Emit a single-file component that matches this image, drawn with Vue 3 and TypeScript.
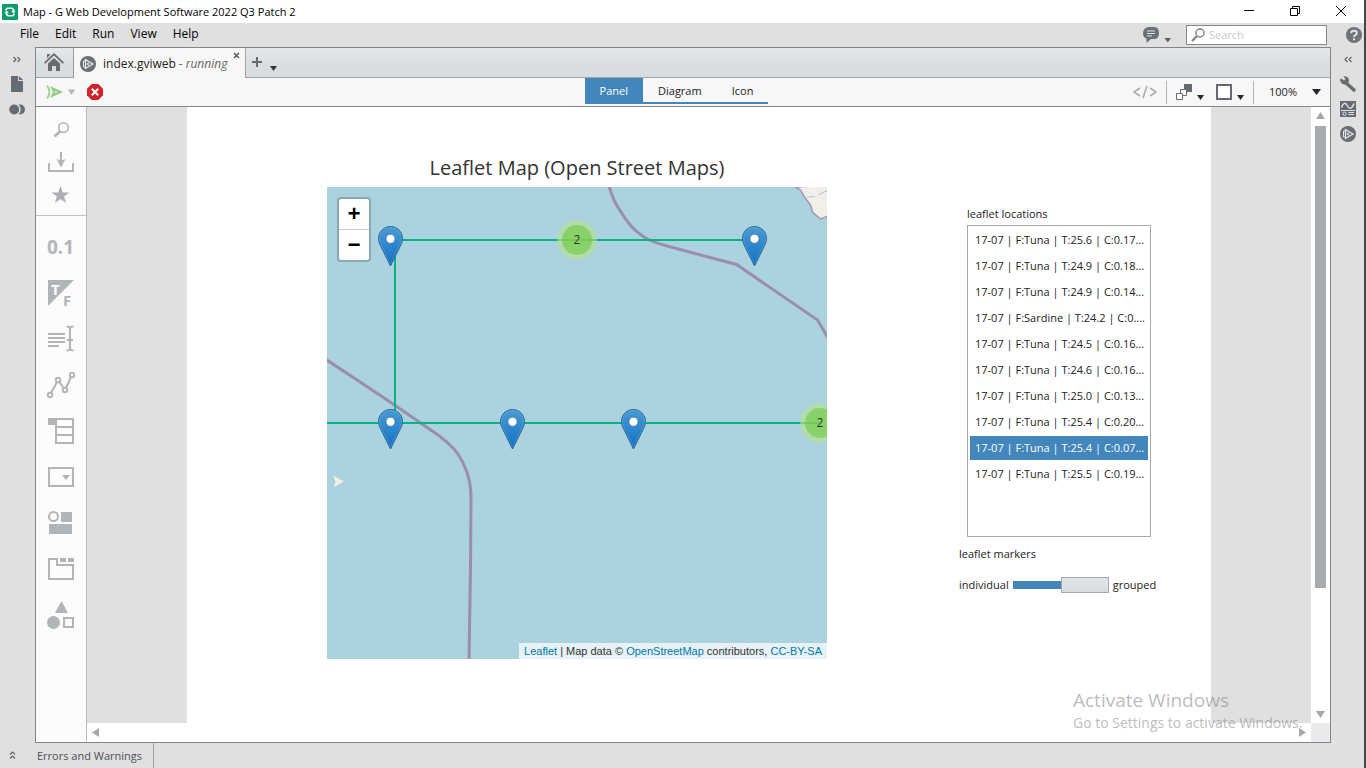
<script setup lang="ts">
import { ref } from 'vue'

const menus = ['File', 'Edit', 'Run', 'View', 'Help']
const views = ['Panel', 'Diagram', 'Icon']
const activeView = ref('Panel')
const query = ref('')
const grouped = ref(1)
const selected = ref(8)

const locations = [
  '17-07 | F:Tuna | T:25.6 | C:0.17...',
  '17-07 | F:Tuna | T:24.9 | C:0.18...',
  '17-07 | F:Tuna | T:24.9 | C:0.14...',
  '17-07 | F:Sardine | T:24.2 | C:0....',
  '17-07 | F:Tuna | T:24.5 | C:0.16...',
  '17-07 | F:Tuna | T:24.6 | C:0.16...',
  '17-07 | F:Tuna | T:25.0 | C:0.13...',
  '17-07 | F:Tuna | T:25.4 | C:0.20...',
  '17-07 | F:Tuna | T:25.4 | C:0.07...',
  '17-07 | F:Tuna | T:25.5 | C:0.19...',
]

interface Point { x: number; y: number }
const markers: Point[] = [
  { x: 51, y: 39 },
  { x: 415, y: 39 },
  { x: 51, y: 222 },
  { x: 173, y: 222 },
  { x: 294, y: 222 },
]
const clusters: Point[] = [
  { x: 230, y: 33 },
  { x: 473, y: 216 },
]
const at = (p: Point) => ({ left: p.x + 'px', top: p.y + 'px' })
</script>

<template>
  <div class="window">
    <header class="titlebar">
      <svg class="logo" width="16" height="16" viewBox="0 0 16 16">
        <rect width="16" height="16" rx="1" fill="#0a9d6b" />
        <path d="M4 6.500V5.500L5.500 4.200h4.500l1.500 1.300v2M12 9.500v1L10.500 11.800H6L4.500 10.500v-2" fill="none" stroke="#fff" stroke-width="1.600" />
        <path d="M9 6.800h4.800L11.400 9.400zM2.200 9.200H7L4.600 6.600z" fill="#fff" />
      </svg>
      <h1>Map - G Web Development Software 2022 Q3 Patch 2</h1>
      <div class="window-controls">
        <button aria-label="Minimize"><svg width="12" height="12"><path d="M1 5.500h10" /></svg></button>
        <button aria-label="Restore"><svg width="12" height="12"><path d="M1.500 3.500h7v7h-7zM3.500 3.500v-2h7v7h-2" /></svg></button>
        <button aria-label="Close"><svg width="12" height="12"><path d="M1 1l10 10M11 1L1 11" /></svg></button>
      </div>
    </header>

    <div class="menubar">
      <nav class="menus">
        <button v-for="m in menus" :key="m">{{ m }}</button>
      </nav>
      <div class="menubar-tools">
        <button class="feedback" aria-label="Feedback">
          <svg width="28" height="18" viewBox="0 0 28 18">
            <path d="M5 1h6q5 0 5 6t-5 6H8l-4.500 4V12.500Q0 11.500 0 7t5-6z" fill="#6b7076" />
            <path d="M4 5h8M4 7.500h8M4 10h5" stroke="#e0e0e0" stroke-width="1.200" />
            <path d="M21.500 12h6.500l-3.200 4.500z" fill="#5c6167" />
          </svg>
        </button>
        <label class="search">
          <svg width="14" height="14" viewBox="0 0 14 14" fill="none" stroke="#85898d">
            <circle cx="9" cy="5" r="4" stroke-width="1.500" /><path d="M6 8L1 13" stroke-width="2.400" />
          </svg>
          <input v-model="query" type="text" placeholder="Search" aria-label="Search">
        </label>
        <button class="help" aria-label="Help">
          <svg width="16" height="16" viewBox="0 0 16 16">
            <circle cx="8" cy="8" r="8" fill="#6f7479" />
            <path d="M5.200 6.200Q5.200 3.800 8 3.800t2.800 2.300Q10.800 7.500 9.300 8.200 8 8.900 8 10" fill="none" stroke="#e4e4e4" stroke-width="2" />
            <rect x="7" y="11.200" width="2" height="2" fill="#e4e4e4" />
          </svg>
        </button>
      </div>
    </div>

    <div class="body">
      <aside class="rail left">
        <button aria-label="Expand"><svg width="8" height="25" viewBox="0 0 8 25" fill="none" stroke="#5f646a" stroke-width="1.200"><path d="M.5 10l2.500 2.500L.5 15M4.500 10L7 12.500 4.500 15" /></svg></button>
        <button aria-label="Project files"><svg width="16" height="25" viewBox="0 0 16 25"><path d="M2 4h7v5h5v11H2zM10 4l4 4h-4z" fill="#666c73" /></svg></button>
        <button aria-label="Palette"><svg width="16" height="25" viewBox="0 0 16 25"><circle cx="11" cy="12.500" r="5" fill="#666c73" /><circle cx="5.500" cy="12.500" r="6.200" fill="#e0e0e0" /><circle cx="5.200" cy="12.500" r="5" fill="#666c73" /></svg></button>
      </aside>

      <main class="workspace">
        <div class="tabs">
          <button class="home" aria-label="Home">
            <svg width="20" height="20" viewBox="0 0 20 20" fill="#676c73">
              <path d="M0 10.500L10 1l10 9.500-1.200 1.200L10 3.500l-8.800 8.200zM3 5.500V2h3v1L3 6z" /><path d="M4 11.500L10 6l6 5.500V19h-4v-5H8v5H4z" />
            </svg>
          </button>
          <div class="tab">
            <svg width="16" height="16" viewBox="0 0 16 16">
              <circle cx="8" cy="8" r="8" fill="#696e74" />
              <path d="M5 5H3.500v6H5" stroke="#f0f0f0" fill="none" />
              <path d="M5.500 3.500l7.500 4.500-7.500 4.500z" fill="#696e74" stroke="#f0f0f0" stroke-width="1.200" /><path d="M6.500 8h3M8 6.500v3" stroke="#f0f0f0" />
            </svg>
            <span class="tab-name">index.gviweb</span><em>- running</em>
            <button class="tab-close" aria-label="Close tab"><svg width="7" height="7"><path d="M1 1l5 5M6 1L1 6" stroke="#555a60" stroke-width="1.500" /></svg></button>
          </div>
          <button class="add" aria-label="New tab">
            <svg width="28" height="18" viewBox="0 0 28 18"><path d="M1 8h10M6 3v10" stroke="#666b70" stroke-width="2" /><path d="M19 12h7l-3.500 5z" fill="#303338" /></svg>
          </button>
        </div>

        <div class="toolbar">
          <div class="run">
            <button aria-label="Run">
              <svg width="30" height="16" viewBox="0 0 30 16">
                <path d="M1 1.500q5 6.500 0 13" fill="none" stroke="#a3d098" stroke-width="2" /><path d="M4 2l13 6-13 6 3-6z" fill="#94c987" /><path d="M8 8h3M10 6.800v2.400" stroke="#d6ecd0" />
                <path d="M22 5.500h7L25.500 11z" fill="#b4b6b8" />
              </svg>
            </button>
            <button aria-label="Abort">
              <svg width="16" height="16" viewBox="0 0 16 16"><path d="M4.700 0h6.600L16 4.700v6.600L11.300 16H4.700L0 11.300V4.700z" fill="#d3222a" /><path d="M4.800 4.800l6.400 6.400M11.200 4.800l-6.400 6.400" stroke="#fff" stroke-width="2" /></svg>
            </button>
          </div>
          <div class="views" role="tablist">
            <button v-for="v in views" :key="v" role="tab" :aria-selected="v === activeView" :class="{ active: v === activeView }" @click="activeView = v">{{ v }}</button>
          </div>
          <div class="layout-tools">
            <button aria-label="View code"><svg width="24" height="14" viewBox="0 0 24 14" fill="none" stroke="#a9acaf" stroke-width="1.600"><path d="M7 3L1 7l6 4M17 3l6 4-6 4M14 1l-4 12" /></svg></button>
            <i class="divider" />
            <button class="order" aria-label="Arrange">
              <svg width="28" height="18" viewBox="0 0 28 18"><path d="M8 1h8v8H8z" fill="#666b73" /><path d="M4.500 6.500h6v6h-6z" fill="#fff" stroke="#666b73" /><path d="M.5 10.500h6v6h-6z" fill="#fff" stroke="#666b73" /><path d="M21 12h7l-3.500 5z" fill="#25282c" /></svg>
            </button>
            <button class="size" aria-label="Resize">
              <svg width="28" height="18" viewBox="0 0 28 18"><path d="M1 2h14v14H1z" fill="#fff" stroke="#666b73" stroke-width="2" /><path d="M21 12h7l-3.500 5z" fill="#25282c" /></svg>
            </button>
            <i class="divider" />
            <button class="zoom"><span>100%</span><svg width="9" height="6"><path d="M0 0h9L4.500 6z" fill="#222529" /></svg></button>
          </div>
        </div>

        <div class="editor">
          <aside class="palette">
            <div class="palette-top">
              <button aria-label="Search palette"><svg width="30" height="33" fill="none" stroke="#b1b5b8"><circle cx="17.500" cy="14.500" r="4.800" stroke-width="1.600" /><path d="M14 18.500l-5.500 5" stroke-width="3" /></svg></button>
              <button aria-label="Import"><svg width="30" height="33"><path d="M3 17v8h24v-8M15 6v9" fill="none" stroke="#b1b5b8" stroke-width="2" /><path d="M10.500 13l4.500 1.500 4.500-1.500-4.500 8.500z" fill="#b1b5b8" /></svg></button>
              <button aria-label="Favorites"><svg width="30" height="33"><path d="M14.500 7l2.300 6.500h6.700l-5.400 4 2 6.500-5.600-4-5.600 4 2-6.500-5.400-4h6.700z" fill="#abafb3" /></svg></button>
            </div>
            <div class="palette-items">
              <button aria-label="Numeric"><svg width="30" height="46"><text x="1" y="30" font-size="19" font-weight="700" fill="#b1b5b8">0.1</text></svg></button>
              <button aria-label="Boolean"><svg width="30" height="46"><path d="M2 10h26L2 36z" fill="#b1b5b8" /><text x="5" y="25" font-size="15" font-weight="700" fill="#fff">T</text><text x="17" y="36" font-size="15" font-weight="700" fill="#b1b5b8">F</text></svg></button>
              <button aria-label="Text"><svg width="30" height="46" fill="none" stroke="#b1b5b8" stroke-width="2"><path d="M2 18h17M2 22h17M2 26h17M2 30h11M24 12v21M21 24h6M20.500 10.500q3.500 0 3.500 2 0-2 3.500-2M20.500 34.500q3.500 0 3.500-2 0 2 3.500 2" /></svg></button>
              <button aria-label="Graphs"><svg width="30" height="46" fill="none" stroke="#b1b5b8" stroke-width="2"><path d="M5 31l6-11M13.500 20l4 6M20 26l5-11" /><circle cx="4" cy="33" r="2.200" /><circle cx="12" cy="18" r="2.200" /><circle cx="19" cy="28" r="2.200" /><circle cx="26" cy="13" r="2.200" /></svg></button>
              <button aria-label="Data containers"><svg width="30" height="46"><path d="M2 10h8v7H2z" fill="#b1b5b8" /><path d="M10 11h17v24H10zM10 19h17M10 27h17" fill="none" stroke="#b1b5b8" stroke-width="2" /></svg></button>
              <button aria-label="Drop-downs"><svg width="30" height="46"><path d="M3 14h24v18H3z" fill="none" stroke="#b1b5b8" stroke-width="2" /><path d="M16 21h8l-4 5z" fill="#b1b5b8" /></svg></button>
              <button aria-label="Layout"><svg width="30" height="46"><circle cx="7.500" cy="16.500" r="4.500" fill="none" stroke="#b1b5b8" stroke-width="2" /><path d="M15 12h11v10H15zM3 24h23v10H3z" fill="#b1b5b8" /></svg></button>
              <button aria-label="Tab control"><svg width="30" height="46"><path d="M3 13h8v6h16v14H3z" fill="none" stroke="#b1b5b8" stroke-width="2" /><path d="M14 12h6v4h-6zM22 12h6v4h-6z" fill="#b1b5b8" /></svg></button>
              <button aria-label="Decorations"><svg width="30" height="46"><path d="M15.500 9L22 21H9z" fill="#b1b5b8" /><circle cx="7.500" cy="30.500" r="6.500" fill="#b1b5b8" /><path d="M18 26h9v9h-9z" fill="none" stroke="#b1b5b8" stroke-width="2" /></svg></button>
            </div>
          </aside>

          <div class="canvas">
            <section class="page">
              <div class="map-column">
                <h2>Leaflet Map (Open Street Maps)</h2>
                <div class="map">
                  <svg class="map-layer">
                    <path d="M468.500 0l5 3 4 7 6 8 2 7 8 7 8-3V-2z" fill="#f2efe9" stroke="#a394b0" stroke-width="1.500" />
                    <path d="M480 10l8-.5M492 7.500l8-4" stroke="#9fd0dd" stroke-width="1.200" />
                    <path d="M6 288.500l11 6L7 300l1.500-5.500z" fill="#f2efe9" />
                    <g fill="none" stroke="#9b8dab" stroke-width="3">
                      <path d="M282 -1Q286 13 292 22 298 32 304.500 39.500 312 47.500 321.500 52.500 330 56.500 340 59L383 70.500 409.500 77.500 490.500 133 501 151" />
                      <path d="M-1 172.500L59.500 212.500 111 248Q120 254.500 126.500 261.500 134 270 138.500 281.500 144 294 144 311L143.500 380 142 473" />
                    </g>
                    <path d="M68 236V53h364M0 236h493" fill="none" stroke="#03b585" stroke-width="2" />
                    <defs>
                      <linearGradient id="pin" x1="0" y1="0" x2="0" y2="1"><stop offset="0" stop-color="#4a9bd2" /><stop offset="1" stop-color="#126fc6" /></linearGradient>
                    </defs>
                  </svg>
                  <button v-for="(m, i) in markers" :key="'m' + i" class="marker" :style="at(m)" :aria-label="'Marker ' + (i + 1)">
                    <svg width="25" height="41" viewBox="0 0 25 41">
                      <path d="M12.500.5C5.800.5.500 5.900.500 12.500c0 3 .9 5.200 2.500 8.300L12.500 40 22 20.800c1.600-3.100 2.500-5.300 2.500-8.300C24.500 5.900 19.200.5 12.500.5z" fill="url(#pin)" stroke="#2e6c97" />
                      <path d="M12.500 1.600C6.500 1.600 1.600 6.500 1.600 12.500c0 2.800.9 4.900 2.400 7.800l8.500 17 8.500-17c1.500-2.900 2.400-5 2.400-7.800 0-6-4.900-10.900-10.900-10.900z" fill="none" stroke="#fff" stroke-opacity=".12" />
                      <circle cx="12.500" cy="12.800" r="4.500" fill="#fff" stroke="#2e6c97" stroke-opacity=".6" />
                    </svg>
                  </button>
                  <button v-for="(c, i) in clusters" :key="'c' + i" class="cluster" :style="at(c)"><span>2</span></button>
                  <div class="zoom-control">
                    <button aria-label="Zoom in">+</button>
                    <button aria-label="Zoom out">−</button>
                  </div>
                  <div class="attribution"><a href="#leaflet">Leaflet</a> | Map data © <a href="#osm">OpenStreetMap</a> contributors, <a href="#license">CC-BY-SA</a></div>
                </div>
              </div>

              <div class="side">
                <div class="locations">
                  <span id="locations-label">leaflet locations</span>
                  <ul role="listbox" aria-labelledby="locations-label">
                    <li v-for="(l, i) in locations" :key="i" role="option" :aria-selected="i === selected" :class="{ selected: i === selected }" @click="selected = i">{{ l }}</li>
                  </ul>
                </div>
                <label class="markers-label" for="grouping">leaflet markers</label>
                <div class="slider">
                  <span>individual</span>
                  <input id="grouping" v-model="grouped" type="range" min="0" max="1">
                  <span>grouped</span>
                </div>
              </div>
            </section>
          </div>

          <div class="vscroll">
            <button aria-label="Scroll up"><svg width="9" height="7"><path d="M0 7h9L4.500 0z" /></svg></button>
            <div class="track"><div class="thumb" /></div>
            <button aria-label="Scroll down"><svg width="9" height="7"><path d="M0 0h9L4.500 7z" /></svg></button>
          </div>
          <div class="hscroll">
            <button aria-label="Scroll left"><svg width="7" height="9"><path d="M7 0v9L0 4.500z" /></svg></button>
            <button aria-label="Scroll right"><svg width="7" height="9"><path d="M0 0v9l7-4.500z" /></svg></button>
          </div>
          <div class="corner" />
        </div>
      </main>

      <aside class="rail right">
        <button aria-label="Collapse"><svg width="8" height="25" viewBox="0 0 8 25" fill="none" stroke="#5f646a" stroke-width="1.200"><path d="M3.500 10L1 12.500 3.500 15M7.500 10L5 12.500 7.500 15" /></svg></button>
        <button aria-label="Configuration"><svg width="16" height="25" viewBox="0 0 16 25"><path d="M5 10l10 9" stroke="#666b72" stroke-width="3.400" /><path d="M0 7.500L1.200 6.500 4 8.500 5.500 7 3.500 4.500Q7.500 3.500 8.800 7q.7 2.200-.8 4-2 2-4.500 1.200Q.5 11.500 0 7.500z" fill="#666b72" /></svg></button>
        <button aria-label="Instrument"><svg width="16" height="25" viewBox="0 0 16 25"><path d="M0 4h16v16H0z" fill="#666b72" /><path d="M1.500 10.500C3.500 5 5.500 5.500 7.500 9s4.500 3 6.500-2.500" fill="none" stroke="#e0e0e0" stroke-width="1.500" /><path d="M1 13.500h14M8.500 15.500h5.500M8.500 17.500h5.500" stroke="#e0e0e0" /><circle cx="4.500" cy="16.700" r="1.700" fill="none" stroke="#e0e0e0" /></svg></button>
        <button aria-label="Execution"><svg width="16" height="25" viewBox="0 0 16 25"><circle cx="8" cy="12" r="8" fill="#696e74" /><path d="M5 9H3.500v6H5" stroke="#e8e8e8" fill="none" /><path d="M5.500 7.500L13 12l-7.500 4.500z" fill="#696e74" stroke="#e8e8e8" stroke-width="1.200" /><path d="M6.500 12h3M8 10.500v3" stroke="#e8e8e8" /></svg></button>
      </aside>
    </div>

    <footer class="status">
      <button class="expand" aria-label="Expand errors"><svg width="7" height="9" fill="none" stroke="#5f646a" stroke-width="1.200"><path d="M1 3.500l2.500-2.500L6 3.500M1 7.500L3.500 5 6 7.500" /></svg></button>
      <button class="errors">Errors and Warnings</button>
    </footer>

    <div class="watermark">
      <strong>Activate Windows</strong>
      <span>Go to Settings to activate Windows.</span>
    </div>
  </div>
</template>

<style>
body { margin: 0; }
</style>

<style scoped>
* { box-sizing: border-box; }
.window {
  position: relative; display: flex; flex-direction: column; height: 100vh; overflow: hidden;
  background: #e0e0e0; border-right: 2px solid #464646; color: #222;
  font: 12px/18px "Open Sans", "Noto Sans", sans-serif;
}
button { display: flex; align-items: center; justify-content: center; margin: 0; padding: 0; border: 0; background: none; color: inherit; font: inherit; }
svg { display: block; flex: none; }
text { font-family: "Open Sans", "Noto Sans", sans-serif; }

.titlebar { display: flex; align-items: center; height: 23px; padding-left: 2px; background: #fff; color: #000; }
.titlebar h1 { flex: 1; margin: 0 0 0 5px; font-size: 11px; font-weight: 400; }
.window-controls { display: flex; align-self: stretch; }
.window-controls button { width: 46px; padding-bottom: 2px; }
.window-controls path { fill: none; stroke: #000; }

.menubar { display: flex; justify-content: space-between; align-items: center; height: 24px; }
.menus { display: flex; gap: 16px; padding: 0 0 2px 20px; color: #000; }
.menubar-tools { display: flex; align-items: center; padding-right: 2px; }
.search { display: flex; align-items: center; width: 141px; height: 20px; margin: 0 19px 0 15px; padding-left: 4px; background: #fff; border: 1px solid #85898d; }
.search input { flex: 1; min-width: 0; margin-left: 4px; padding: 0; border: 0; outline: 0; background: none; font: inherit; font-size: 11px; }
.search input::placeholder { color: #c8c8c8; opacity: 1; }

.body { flex: 1; min-height: 0; display: flex; }
.rail { display: flex; flex-direction: column; align-items: center; }
.rail.left { width: 35px; padding-right: 1px; }
.rail.right { width: 33px; }
.workspace { flex: 1; min-width: 0; display: flex; flex-direction: column; border: 1px solid #82868b; }

.tabs { display: flex; height: 30px; background: linear-gradient(#e6e8ea, #d9dfe1 50%, #d7dcde); box-shadow: inset 0 -1px #a0a4a7; }
.home { width: 38px; padding: 0 2px 2px 0; border-right: 1px solid #979b9f; }
.tab { display: flex; align-items: center; width: 172px; padding: 2px 5px 0 6px; background: #f7f7f7; border-right: 1px solid #a3a6a9; }
.tab-name { margin-left: 7px; }
.tab em { margin-left: 3px; color: #666; }
.tab-close { align-self: flex-start; margin: 2px 0 0 auto; }
.add { margin-left: 5px; }

.toolbar { display: grid; grid-template-columns: 1fr auto 1fr; height: 29px; background: #f7f7f7; border-bottom: 1px solid #83888d; }
.run { display: flex; gap: 11px; padding-left: 10px; }
.views { display: flex; margin: 0 13px 2px 0; box-shadow: inset 0 -2px #4286bb; font-size: 11px; }
.views button { padding: 0 15px; }
.views .active { background: #4286bb; color: #fff; }
.layout-tools { display: flex; align-items: center; justify-content: flex-end; padding-right: 9px; }
.divider { width: 1px; height: 23px; margin: 0 9px; background: #aeb6c2; }
.size { margin-left: 12px; }
.zoom { gap: 15px; margin-left: 6px; font-size: 11px; }

.editor { flex: 1; min-height: 0; display: grid; grid-template-columns: auto 1fr 19px; grid-template-rows: 1fr 19px; }
.palette { grid-row: 1 / 3; width: 51px; background: #fcfcfc; border-right: 1px solid #b9bbbd; }
.palette button { margin: 0 auto; }
.palette-top { padding: 6px 0 3px; border-bottom: 1px solid #c0c2c4; }
.palette-items { padding-top: 8px; }
.canvas { min-width: 0; min-height: 0; padding: 0 100px; overflow: hidden; }
.page { display: flex; gap: 132px; height: 100%; padding: 42px 52px 64px 140px; background: #fff; }
.map-column { flex: 1; min-width: 0; display: flex; flex-direction: column; }
h2 { margin: 0; font-size: 20px; line-height: 38px; font-weight: 400; text-align: center; color: #333; white-space: nowrap; }

.map { position: relative; flex: 1; overflow: hidden; background: #aad3df; }
.map-layer { position: absolute; inset: 0; width: 100%; height: 100%; }
.marker { position: absolute; }
.cluster { position: absolute; width: 40px; height: 40px; border-radius: 50%; background: rgba(181, 226, 140, .6); color: #333; }
.cluster span { width: 30px; height: 30px; border-radius: 50%; background: rgba(110, 204, 57, .6); line-height: 30px; }
.zoom-control { position: absolute; left: 10px; top: 10px; border: 2px solid rgba(0, 0, 0, .2); border-radius: 4px; background: #fff; background-clip: padding-box; }
.zoom-control button { width: 30px; height: 30px; padding-top: 4px; color: #000; font: 700 22px/26px "Liberation Mono", monospace; }
.zoom-control button:first-child { height: 31px; border-bottom: 1px solid #ccc; }
.attribution { position: absolute; right: 0; bottom: 0; padding: 0 5px; background: rgba(255, 255, 255, .7); color: #333; font: 11px/16px "Liberation Sans", Arial, sans-serif; white-space: nowrap; }
.attribution a { color: #0078a8; text-decoration: none; }

.side { width: 200px; padding-top: 56px; font-size: 11px; white-space: nowrap; }
.locations { width: 184px; margin-left: 8px; }
.locations ul { display: flex; flex-direction: column; gap: 2px; height: 312px; margin: 2px 0 8px; padding: 2px; border: 1px solid #a5a8aa; list-style: none; }
.locations li { flex: none; height: 24px; padding: 0 5px; line-height: 24px; }
.locations .selected { background: #4286bb; color: #fff; }
.markers-label { display: block; }
.slider { display: flex; align-items: center; gap: 4px; margin-top: 13px; }
.slider input { width: 96px; height: 16px; margin: 0; appearance: none; background: linear-gradient(#4286bb, #4286bb) center / 100% 8px no-repeat; }
.slider input::-webkit-slider-thumb { appearance: none; width: 48px; height: 16px; background: linear-gradient(#e3e6e8, #d7dcdf); border: 1px solid #a5a8aa; border-radius: 0; }

.vscroll { display: flex; flex-direction: column; align-items: center; gap: 7px; padding: 5px 0; background: #fff; }
.vscroll svg, .hscroll svg { fill: #a5a8ab; }
.track { flex: 1; width: 11px; }
.thumb { height: 80%; background: #a7abae; }
.hscroll { display: flex; align-items: center; justify-content: space-between; padding: 0 5px; background: #fff; }
.corner { background: #e8eaec; }

.status { display: flex; height: 25px; color: #4d5055; font-size: 11px; }
.expand { width: 25px; }
.errors { padding: 0 11px 0 12px; border-right: 1px solid #a0a3a6; }

.watermark { position: absolute; right: 56px; bottom: 34px; display: flex; flex-direction: column; width: 235px; color: rgba(130, 130, 130, .55); pointer-events: none; white-space: nowrap; }
.watermark strong { font-size: 19px; line-height: 24px; font-weight: 400; }
.watermark span { font-size: 14px; line-height: 22px; }
</style>
